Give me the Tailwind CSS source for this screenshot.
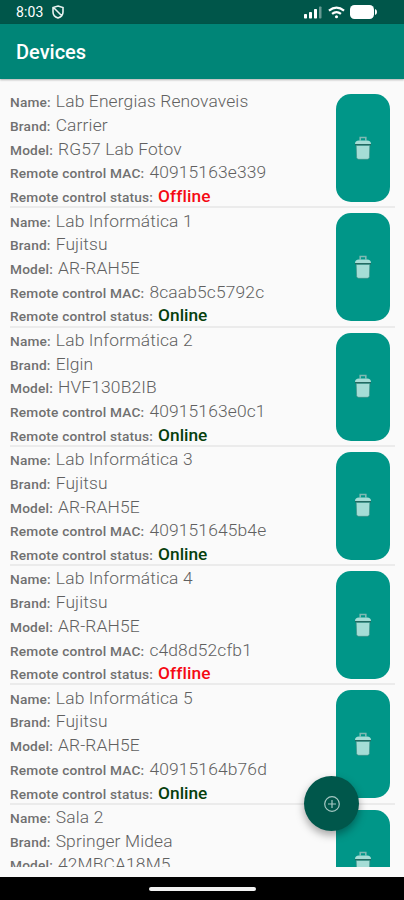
<!DOCTYPE html>
<html lang="en">
<head>
<meta charset="utf-8">
<title>Devices</title>
<script src="https://cdn.jsdelivr.net/npm/@tailwindcss/browser@4"></script>
</head>
<body class="bg-[#fafafa]">
<div class="relative flex h-[900px] w-[404px] flex-col overflow-hidden bg-[#fafafa] font-['Roboto',sans-serif]">
  <header class="flex h-6 shrink-0 items-center bg-[#00564a] pr-[27px] pl-4 text-white">
    <span class="text-[14px] leading-6 tracking-[0.1px]">8:03</span>
    <svg class="ml-[9px] h-[14px] w-3" viewBox="0 0 12 14" fill="none" stroke="#e8f2f0" stroke-width="1.6"><path d="M6 1 11 2.5V7c0 3-2 5-5 6C3 12 1 10 1 7V2.5ZM2 3l8 8"/></svg>
    <svg class="ml-auto h-[13px] w-[18px]" viewBox="0 0 18 13" fill="#fff"><rect x="0" y="8" width="3" height="4.500" rx=".7"/><rect x="5" y="6" width="3" height="6.500" rx=".7"/><rect x="10" y="3" width="3" height="9.500" rx=".7"/><rect x="15" y="0.500" width="2.500" height="12" rx=".7" opacity=".4"/></svg>
    <svg class="ml-[6px] h-[13px] w-[17px]" viewBox="0 0 18 13" fill="none" stroke="#fff" stroke-width="2.300"><path d="M1 4.600Q9-2 17 4.600M4.300 8Q9 4 13.700 8"/><circle cx="9" cy="11" r="1.600" fill="#fff" stroke="none"/></svg>
    <svg class="ml-[5px] h-[14px] w-[27px]" viewBox="0 0 27 14" fill="#fff"><rect width="24" height="14" rx="4.500"/><path d="M25 4q2 .3 2 3t-2 3z"/></svg>
  </header>
  <div class="flex h-[55px] shrink-0 items-center bg-[#008577] pt-px pl-4 shadow-[0_1px_2px_rgba(0,0,0,0.3)]">
    <h1 class="text-[20px] leading-6 font-medium text-white">Devices</h1>
  </div>
  <main class="mt-[10px] h-[778px] shrink-0 overflow-hidden pr-[9px] pl-[10px]" id="list"></main>
  <footer class="mt-auto flex h-[23px] shrink-0 items-center justify-center bg-black"><div class="h-[4px] w-[107px] rounded-full bg-[#f2f2f2]"></div></footer>
  <button aria-label="Add device" class="absolute top-[776px] left-[304px] flex size-[55px] items-center justify-center rounded-full bg-[#00574b] shadow-[0_4px_8px_rgba(0,0,0,0.35)]">
    <svg class="size-[18px]" viewBox="0 0 18 18" fill="none" stroke="#a5c8c3" stroke-width="1.200"><circle cx="9" cy="9" r="7.300"/><path d="M9 5v8M5 9h8"/></svg>
  </button>
</div>
<script>
const devices = [
  ["Lab Energias Renovaveis", "Carrier", "RG57 Lab Fotov", "40915163e339", false],
  ["Lab Informática 1", "Fujitsu", "AR-RAH5E", "8caab5c5792c", true],
  ["Lab Informática 2", "Elgin", "HVF130B2IB", "40915163e0c1", true],
  ["Lab Informática 3", "Fujitsu", "AR-RAH5E", "409151645b4e", true],
  ["Lab Informática 4", "Fujitsu", "AR-RAH5E", "c4d8d52cfb1", false],
  ["Lab Informática 5", "Fujitsu", "AR-RAH5E", "40915164b76d", true],
  ["Sala 2", "Springer Midea", "42MBCA18M5"]
];
const labels = ["Name:", "Brand:", "Model:", "Remote control MAC:"];
const line = (label, value) => `<div class="flex h-[23.7px] items-baseline gap-[5px] whitespace-nowrap"><span class="text-[13.7px] leading-[23.7px] font-medium tracking-[0.18px] text-[#707070]">${label}</span>${value}</div>`;
const status = online => online
  ? '<span class="text-[17.3px] leading-[23.7px] font-medium text-[#06400d]">Online</span>'
  : '<span class="text-[17.3px] leading-[23.7px] font-medium tracking-[0.08px] text-[#f50a14]">Offline</span>';
document.getElementById("list").innerHTML = devices.map(d => `
  <section class="flex h-[119.3px] items-start justify-between border-b-2 border-[#ebebeb]">
    <div class="pt-[1.3px]">
      ${d.slice(0, 4).map((v, i) => line(labels[i], `<span class="text-[17.4px] leading-[23.7px] font-light tracking-[0.15px] text-[#606060]">${v}</span>`)).join("")}
      ${d.length > 4 ? line("Remote control status:", status(d[4])) : ""}
    </div>
    <button aria-label="Delete" class="mt-[5px] mr-[5px] flex h-[108px] w-[54px] items-center justify-center rounded-[15px] bg-[#009688]">
      <svg class="mb-[1px] h-6 w-[18px]" viewBox="0 0 18 24"><path d="M6.200 4.500V1.500h5.600v3" fill="none" stroke="#7fb9b2" stroke-width="1.600"/><path d="M1 8Q1 4.500 5 4.500h8q4 0 4 3.500z" fill="#a5ddd6"/><path d="M1 8.700h16" stroke="#28655d" stroke-width="1.200"/><path d="M2.200 9.500h13.600L15.400 21.500q-.2 1.800-2 1.800H4.600q-1.800 0-2-1.800z" fill="#a5ddd6" stroke="#3e887f" stroke-width=".6"/></svg>
    </button>
  </section>`).join("");
</script>
</body>
</html>
